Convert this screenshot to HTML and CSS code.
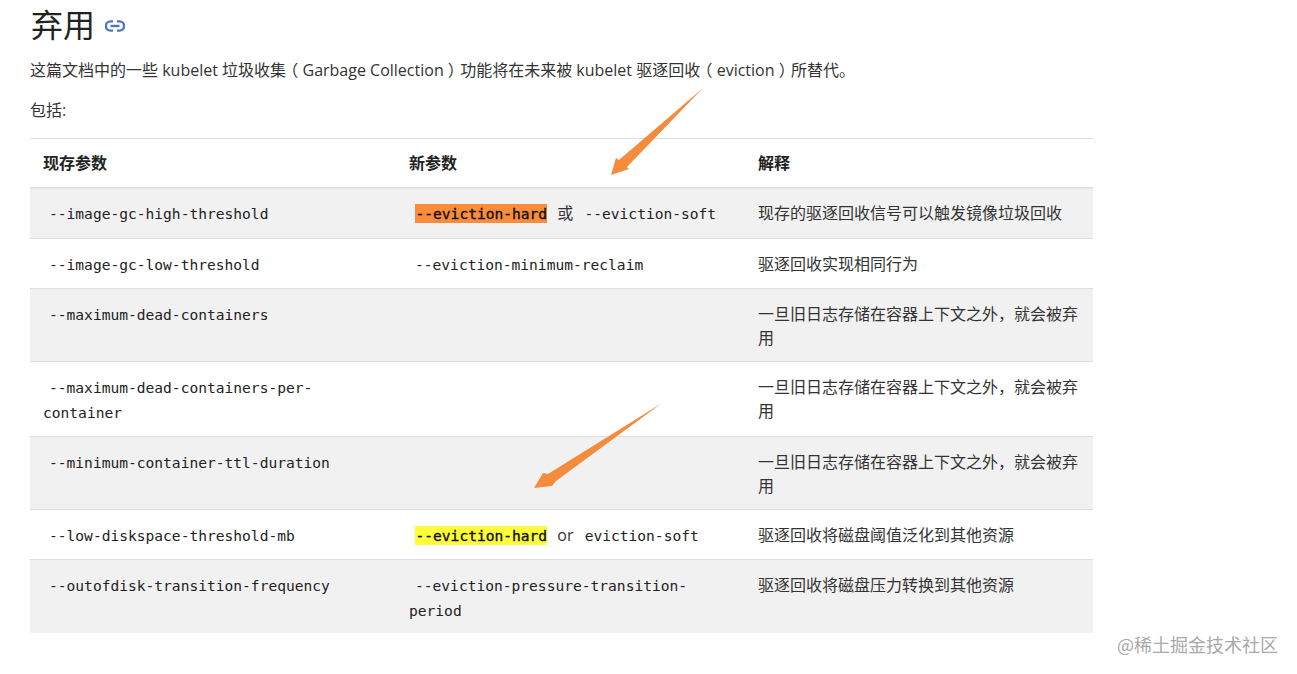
FILE: index.html
```html
<!DOCTYPE html>
<html lang="zh-CN">
<head>
<meta charset="utf-8">
<title>弃用</title>
<link rel="stylesheet" href="styles.css">
</head>
<body>
<main class="doc">
  <h2 class="title">弃用 <a class="anchor" href="#"><svg width="20" height="12" viewBox="0 0 20 12" fill="none" stroke="#4a76c0" stroke-width="2.4"><path d="M8 1.4H5.5a4.6 4.6 0 0 0 0 9.2H8"/><path d="M12 1.4h2.5a4.6 4.6 0 0 1 0 9.2H12"/><path d="M5.5 6h9"/></svg></a></h2>
  <p class="para">这篇文档中的一些 kubelet 垃圾收集<span class="open">（</span> Garbage Collection <span class="close">）</span>功能将在未来被 kubelet 驱逐回收<span class="open">（</span> eviction <span class="close">）</span>所替代。</p>
  <p class="para">包括:</p>
  <table class="params">
    <thead>
      <tr class="head-row"><th class="col-a">现存参数</th><th class="col-b">新参数</th><th class="col-c">解释</th></tr>
    </thead>
    <tbody>
      <tr class="odd first"><td><code>--image-gc-high-threshold</code></td><td><code><mark class="orange">--eviction-hard</mark></code> <span class="word">或</span> <code>--eviction-soft</code></td><td>现存的驱逐回收信号可以触发镜像垃圾回收</td></tr>
      <tr><td><code>--image-gc-low-threshold</code></td><td><code>--eviction-minimum-reclaim</code></td><td>驱逐回收实现相同行为</td></tr>
      <tr class="odd"><td><code>--maximum-dead-containers</code></td><td></td><td>一旦旧日志存储在容器上下文之外，就会被弃用</td></tr>
      <tr><td><code>--maximum-dead-containers-per-container</code></td><td></td><td>一旦旧日志存储在容器上下文之外，就会被弃用</td></tr>
      <tr class="odd"><td><code>--minimum-container-ttl-duration</code></td><td></td><td>一旦旧日志存储在容器上下文之外，就会被弃用</td></tr>
      <tr><td><code>--low-diskspace-threshold-mb</code></td><td><code><mark class="yellow">--eviction-hard</mark></code> <span class="word">or</span> <code>eviction-soft</code></td><td>驱逐回收将磁盘阈值泛化到其他资源</td></tr>
      <tr class="odd"><td><code>--outofdisk-transition-frequency</code></td><td><code>--eviction-pressure-transition-period</code></td><td>驱逐回收将磁盘压力转换到其他资源</td></tr>
    </tbody>
  </table>
</main>
<svg class="arrows" width="1297" height="674" viewBox="0 0 1297 674" aria-hidden="true">
  <path fill="#f58b3c" d="M703 88 L627 167 L629 169 L611 175 L616 158 L619 160 Z"/>
  <path fill="#f58b3c" d="M662 403 L556 481 L552 486 L534 488 L543 473 L548 474 Z"/>
</svg>
<div class="watermark">@稀土掘金技术社区</div>
</body>
</html>
```
FILE: styles.css
```css
* { box-sizing: border-box; }
html, body { margin: 0; height: 674px; overflow: hidden; background: #fff; }
body { font-family: "Open Sans", "Noto Sans CJK SC", sans-serif; color: #333; font-size: 16px; position: relative; }
.doc { width: 1094px; padding: 0 0 0 30px; }
.title { margin: 0; padding: 3px 0 0 1px; height: 53px; font-size: 32px; line-height: 44px; font-weight: 400; color: #222; }
.anchor { display: inline-block; margin-left: 2px; vertical-align: 5px; line-height: 0; }
.para { margin: 0; height: 40px; line-height: 30px; padding-top: 2px; color: #333; }
.para + .para { height: 45px; }
.open { font-feature-settings: "halt"; padding-left: 4.3px; }
.close { font-feature-settings: "halt"; padding-right: 4.3px; }
.params { width: 1063px; border-collapse: collapse; table-layout: fixed; border-top: 1px solid #dedede; line-height: 24px; }
.col-a { width: 366px; }
.col-b { width: 349px; }
.col-c { width: 348px; }
th { text-align: left; font-weight: 700; padding: 12px 13px; height: 49px; color: #222; border-bottom: 1px solid #e0e0e0; }
td { vertical-align: top; padding: 13px 13px 11px; border-bottom: 1px solid #dedede; color: #333; }
.first td { box-shadow: inset 0 2px 2px -1px rgba(0,0,0,.06); padding-bottom: 12px; }
tbody tr:last-child td { border-bottom: 0; padding-bottom: 10px; }
.odd td { background: #f1f1f1; }
code { font-family: "DejaVu Sans Mono", monospace; font-size: 14.58px; line-height: 24px; padding-left: 6px; color: #222; overflow-wrap: anywhere; }
mark { color: #111; -webkit-text-stroke: .35px #111; padding: 1px 0 1px .5px; }
.orange { background: #fb8c3c; }
.yellow { background: #fdfd3a; }
.word { padding: 0 1px 0 6px; }
.arrows { position: absolute; left: 0; top: 0; pointer-events: none; }
.watermark { position: absolute; left: 1117px; top: 632px; font-size: 18px; line-height: 24px; color: #a9a9a9; font-family: "Noto Sans CJK SC", sans-serif; white-space: nowrap; }
```
